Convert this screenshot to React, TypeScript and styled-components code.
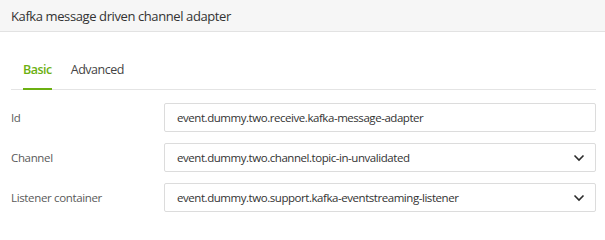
import React from 'react';
import styled, { createGlobalStyle } from 'styled-components';

const GlobalStyle = createGlobalStyle`
  body {
    margin: 0;
    background: #fff;
    font-family: "Open Sans", "Noto Sans", sans-serif;
    color: #333;
  }
`;

const fields = [
  { label: 'Id', value: 'event.dummy.two.receive.kafka-message-adapter', select: false },
  { label: 'Channel', value: 'event.dummy.two.channel.topic-in-unvalidated', select: true },
  { label: 'Listener container', value: 'event.dummy.two.support.kafka-eventstreaming-listener', select: true },
];

const Chevron: React.FC = () => (
  <svg width="12" height="8" viewBox="0 0 12 8">
    <path d="M1.5 1.5 L6 6 L10.5 1.5" fill="none" stroke="#2b2b2b" strokeWidth="1.6" />
  </svg>
);

const App: React.FC = () => {
  return (
    <>
      <GlobalStyle />
      <Panel>
        <Header>Kafka message driven channel adapter</Header>
        <Body>
          <TabBar>
            <Tab $active>Basic</Tab>
            <Tab>Advanced</Tab>
          </TabBar>
          <Form>
            {fields.map((f) => (
              <Row key={f.label}>
                <Label>{f.label}</Label>
                <Field>
                  <FieldText>{f.value}</FieldText>
                  {f.select && <Chevron />}
                </Field>
              </Row>
            ))}
          </Form>
        </Body>
      </Panel>
    </>
  );
};

const Panel = styled.div`
  width: 605px;
  height: 235px;
  background: #fff;
`;

const Header = styled.div`
  height: 32px;
  display: flex;
  align-items: center;
  padding-left: 11px;
  background: #f6f6f6;
  border-bottom: 1px solid #e2e2e2;
  font-size: 13px;
  letter-spacing: -0.4px;
  color: #333;
  box-sizing: border-box;
`;

const Body = styled.div`
  padding: 0 9px 0 11px;
`;

const TabBar = styled.div`
  display: flex;
  gap: 19px;
  height: 58px;
  padding-left: 12px;
  border-bottom: 1px solid #e4e4e4;
  box-sizing: border-box;
`;

const Tab = styled.div<{ $active?: boolean }>`
  display: flex;
  align-items: center;
  padding-top: 18px;
  font-size: 12.5px;
  letter-spacing: -0.5px;
  font-weight: ${(p) => (p.$active ? 600 : 400)};
  color: ${(p) => (p.$active ? '#6cb011' : '#444')};
  border-bottom: 2px solid ${(p) => (p.$active ? '#6cb011' : 'transparent')};
  margin-bottom: -1px;
  box-sizing: border-box;
`;

const Form = styled.div`
  display: flex;
  flex-direction: column;
  gap: 11px;
  padding-top: 13px;
`;

const Row = styled.div`
  display: grid;
  grid-template-columns: 153px 1fr;
  align-items: center;
`;

const Label = styled.div`
  font-size: 11.5px;
  letter-spacing: -0.35px;
  color: #5a5a5a;
`;

const Field = styled.div`
  height: 29px;
  display: flex;
  align-items: center;
  justify-content: space-between;
  padding: 0 10px 0 12px;
  border: 1px solid #dcdcdc;
  border-radius: 2px;
  box-sizing: border-box;
`;

const FieldText = styled.span`
  font-size: 11.5px;
  letter-spacing: -0.45px;
  color: #333;
`;

export default App;
